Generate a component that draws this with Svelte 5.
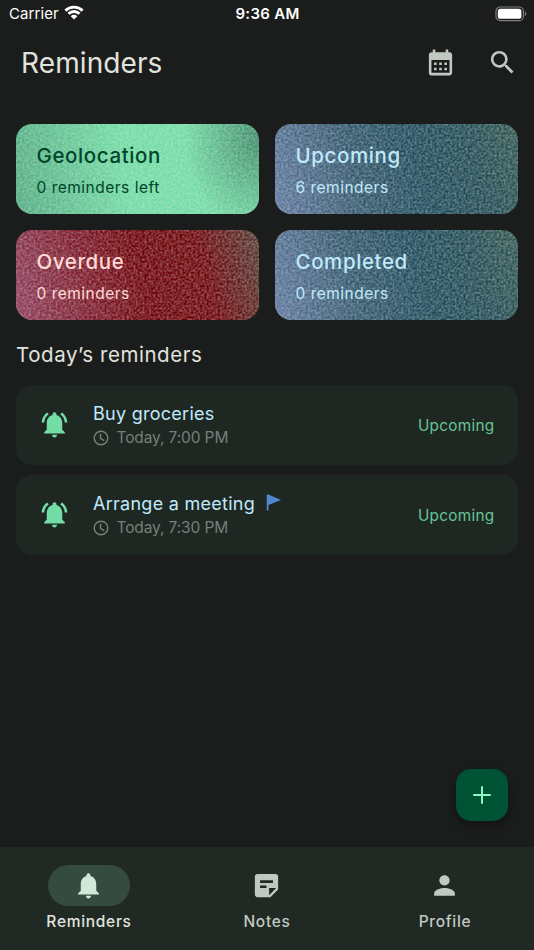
<script lang="ts">
	interface Summary {
		title: string;
		note: string;
		tone: string;
	}

	interface Reminder {
		title: string;
		time: string;
		status: string;
		flagged: boolean;
	}

	const summaries: Summary[] = [
		{ title: 'Geolocation', note: '0 reminders left', tone: 'green' },
		{ title: 'Upcoming', note: '6 reminders', tone: 'blue' },
		{ title: 'Overdue', note: '0 reminders', tone: 'red' },
		{ title: 'Completed', note: '0 reminders', tone: 'blue' },
	];

	const reminders: Reminder[] = [
		{ title: 'Buy groceries', time: 'Today, 7:00 PM', status: 'Upcoming', flagged: false },
		{ title: 'Arrange a meeting', time: 'Today, 7:30 PM', status: 'Upcoming', flagged: true },
	];

	const tabs = [
		{
			label: 'Reminders',
			icon: 'M12 22c1.1 0 2-.9 2-2h-4c0 1.1.89 2 2 2zm6-6v-5c0-3.07-1.64-5.64-4.5-6.32V4c0-.83-.67-1.5-1.5-1.5s-1.5.67-1.5 1.5v.68C7.63 5.36 6 7.92 6 11v5l-2 2v1h16v-1l-2-2z',
		},
		{
			label: 'Notes',
			icon: 'M19 3H4.99C3.89 3 3 3.9 3 5l.01 14c0 1.1.89 2 1.99 2h10l6-6V5c0-1.1-.9-2-2-2zM7 8h10v2H7V8zm5 6H7v-2h5v2zm2 5.5V14h5.5L14 19.5z',
		},
		{
			label: 'Profile',
			icon: 'M12 12c2.21 0 4-1.79 4-4s-1.79-4-4-4-4 1.79-4 4 1.79 4 4 4zm0 2c-2.67 0-8 1.34-8 4v2h16v-2c0-2.66-5.33-4-8-4z',
		},
	];

	let activeTab = $state('Reminders');
</script>

<div class="screen">
	<!-- shared grain filter for the summary cards -->
	<svg class="defs" aria-hidden="true">
		<filter id="grain" x="0" y="0" width="100%" height="100%" color-interpolation-filters="sRGB">
			<feTurbulence type="fractalNoise" baseFrequency="0.45" numOctaves="1" seed="4" />
			<feColorMatrix values="0 0 0 0 .92  0 0 0 0 .92  0 0 0 0 .92  0.75 0 0 0 -0.22" />
		</filter>
	</svg>

	<div class="status-bar">
		<div class="carrier">
			<span>Carrier</span>
			<svg class="wifi" viewBox="0 0 20 15">
				<path d="M1.4 5.6a12.4 12.4 0 0 1 17.2 0M4.5 8.8a7.9 7.9 0 0 1 11 0" />
				<path class="solid" d="M10 14.4l-3.3-3.2a4.7 4.7 0 0 1 6.6 0z" />
			</svg>
		</div>
		<span class="clock">9:36 AM</span>
		<svg class="battery" viewBox="0 0 32 16">
			<rect class="shell" x="1" y="1" width="27.4" height="13.6" rx="4.2" />
			<rect class="charge" x="2.8" y="2.8" width="23.6" height="10" rx="2.6" />
			<path class="cap" d="M29.9 5.6c1.8.7 1.8 3.9 0 4.6z" />
		</svg>
	</div>

	<header>
		<h1>Reminders</h1>
		<button aria-label="Calendar">
			<svg class="icon" viewBox="0 0 24 24"><path d="M19 4h-1V2h-2v2H8V2H6v2H5c-1.11 0-1.99.9-1.99 2L3 20a2 2 0 0 0 2 2h14c1.1 0 2-.9 2-2V6c0-1.1-.9-2-2-2zm0 16H5V10h14v10zM9 14H7v-2h2v2zm4 0h-2v-2h2v2zm4 0h-2v-2h2v2zm-8 4H7v-2h2v2zm4 0h-2v-2h2v2zm4 0h-2v-2h2v2z" /></svg>
		</button>
		<button aria-label="Search">
			<svg class="icon" viewBox="0 0 24 24"><path d="M15.5 14h-.79l-.28-.27A6.47 6.47 0 0 0 16 9.5 6.5 6.5 0 1 0 9.5 16c1.61 0 3.09-.59 4.23-1.57l.27.28v.79l5 4.99L20.49 19l-4.99-5zm-6 0C7.01 14 5 11.99 5 9.5S7.01 5 9.5 5 14 7.01 14 9.5 11.99 14 9.5 14z" /></svg>
		</button>
	</header>

	<main>
		<div class="summaries">
			{#each summaries as card}
				<div class="summary {card.tone}">
					<svg class="grain" aria-hidden="true"><rect width="100%" height="100%" filter="url(#grain)" /></svg>
					<h2>{card.title}</h2>
					<p>{card.note}</p>
				</div>
			{/each}
		</div>

		<h3>Today’s reminders</h3>

		<div class="list">
			{#each reminders as item}
				<div class="item">
					<svg class="icon bell" viewBox="0 0 24 24"><path d="M7.58 4.08L6.15 2.65C3.75 4.48 2.17 7.3 2.03 10.5h2a8.445 8.445 0 0 1 3.55-6.42zm12.39 6.42h2c-.15-3.2-1.73-6.02-4.12-7.85l-1.42 1.43a8.495 8.495 0 0 1 3.54 6.42zM18 11c0-3.07-1.64-5.64-4.5-6.32V4c0-.83-.67-1.5-1.5-1.5s-1.5.67-1.5 1.5v.68C7.63 5.36 6 7.92 6 11v5l-2 2v1h16v-1l-2-2v-5zm-6 11c1.1 0 2-.9 2-2h-4c0 1.1.89 2 2 2z" /></svg>
					<div class="details">
						<div class="name">
							<span>{item.title}</span>
							{#if item.flagged}
								<svg class="flag" viewBox="0 0 16 17"><path d="M.7.5h1.6L15 6 2.4 11v5.5H.7z" /></svg>
							{/if}
						</div>
						<div class="time">
							<svg viewBox="0 0 16 16"><circle cx="8" cy="8" r="6.8" /><path d="M7.5 3.8v4.6l3.6 2.2" /></svg>
							<span>{item.time}</span>
						</div>
					</div>
					<span class="status">{item.status}</span>
				</div>
			{/each}
		</div>
	</main>

	<button class="fab" aria-label="Add reminder">
		<svg class="icon" viewBox="0 0 24 24"><path d="M19 12.8h-6.2V19h-1.6v-6.2H5v-1.6h6.2V5h1.6v6.2H19z" /></svg>
	</button>

	<nav>
		{#each tabs as tab}
			<button class="tab" class:active={activeTab === tab.label} onclick={() => (activeTab = tab.label)}>
				<span class="pill">
					<svg class="icon" viewBox="0 0 24 24"><path d={tab.icon} /></svg>
				</span>
				<span class="label">{tab.label}</span>
			</button>
		{/each}
	</nav>
</div>

<style>
	:global(body) {
		background: #1b1d1c;
	}

	.screen {
		position: relative;
		display: flex;
		flex-direction: column;
		width: 534px;
		height: 950px;
		overflow: hidden;
		background: #1b1d1c;
		color: #e1e3df;
		font-family: Inter, 'Liberation Sans', sans-serif;
	}

	h1, h2, h3, p {
		margin: 0;
	}

	button {
		padding: 0;
		border: 0;
		background: none;
		color: inherit;
		font: inherit;
		cursor: pointer;
	}

	svg {
		display: block;
		flex: none;
	}

	.defs {
		position: absolute;
		width: 0;
		height: 0;
	}

	.icon {
		width: 31px;
		height: 31px;
		fill: currentColor;
	}

	.status-bar {
		display: grid;
		grid-template-columns: 1fr auto 1fr;
		align-items: center;
		height: 28px;
		padding: 0 7px 0 9px;
		color: #fff;
		font-size: 15px;
		line-height: 28px;
	}

	.carrier {
		display: flex;
		align-items: center;
		gap: 5px;
		letter-spacing: 0.1px;
	}

	.wifi {
		width: 20px;
		height: 15px;
		margin-top: -3px;
		fill: none;
		stroke: #fff;
		stroke-width: 2.9;
	}

	.wifi .solid {
		fill: #fff;
		stroke: none;
	}

	.clock {
		margin-right: 1px;
		font-weight: 600;
		letter-spacing: 0.3px;
	}

	.battery {
		justify-self: end;
		width: 32px;
		height: 16px;
		margin-top: -1px;
	}

	.battery .shell {
		fill: none;
		stroke: #7c7d7d;
		stroke-width: 1.2;
	}

	.battery .charge { fill: #fff; }
	.battery .cap { fill: #7c7d7d; }

	header {
		display: flex;
		align-items: center;
		gap: 31px;
		height: 68px;
		padding: 0 16px 0 21px;
		color: #c0c9c1;
	}

	h1 {
		flex: 1;
		padding-top: 2px;
		color: #e1e3df;
		font-size: 28px;
		font-weight: 400;
		line-height: 68px;
		letter-spacing: 0.1px;
	}

	main {
		flex: 1;
		padding: 28px 16px 0;
	}

	.summaries {
		display: grid;
		grid-template-columns: 1fr 1fr;
		gap: 16px;
	}

	.summary {
		position: relative;
		height: 90px;
		padding: 18px 20.5px 0;
		box-sizing: border-box;
		border-radius: 16px;
		overflow: hidden;
	}

	.summary h2, .summary p {
		position: relative;
	}

	.summary h2 {
		font-size: 20.5px;
		font-weight: 500;
		line-height: 28px;
		letter-spacing: 0.6px;
	}

	.summary p {
		margin-top: 7px;
		font-size: 15.5px;
		line-height: 22px;
		letter-spacing: 0.5px;
	}

	.grain {
		position: absolute;
		inset: 0;
		width: 100%;
		height: 100%;
	}

	.green {
		color: #00452b;
		background:
			radial-gradient(ellipse 75px 95px at 100% 15%, #3c8a66, rgba(60, 138, 102, 0)),
			linear-gradient(80deg, #4fab80, #6fdca3 45%, #70dea5);
	}

	.blue {
		color: #bfe9fb;
		background: linear-gradient(75deg, #5e779f, #2f556a 35%, #1b4958 60%, #204a52 82%, #2e564d);
	}

	.red {
		color: #ffdad6;
		background: linear-gradient(75deg, #8d3c5a, #7a1424 32%, #6c0006 52%, #6c0308 76%, #523a32);
	}

	h3 {
		margin-top: 21px;
		font-size: 20.5px;
		font-weight: 400;
		line-height: 28px;
		letter-spacing: 0.55px;
	}

	.list {
		display: flex;
		flex-direction: column;
		gap: 10.5px;
		margin-top: 16px;
	}

	.item {
		display: flex;
		align-items: center;
		height: 79.6px;
		padding: 0 23.5px 0 23px;
		box-sizing: border-box;
		border-radius: 16px;
		background: #1f2723;
	}

	.bell {
		color: #72dea5;
	}

	.details {
		flex: 1;
		margin-left: 23px;
	}

	.name {
		display: flex;
		align-items: center;
		gap: 11px;
		color: #bfe9fb;
		font-size: 18px;
		line-height: 26px;
		letter-spacing: 0.27px;
	}

	.flag {
		width: 16px;
		height: 17px;
		margin-top: -3px;
		fill: #5189d0;
	}

	.time {
		display: flex;
		align-items: center;
		gap: 7.5px;
		color: #748078;
		font-size: 15.5px;
		line-height: 22px;
		letter-spacing: -0.12px;
	}

	.time svg {
		width: 16px;
		height: 16px;
		fill: none;
		stroke: currentColor;
		stroke-width: 1.4;
	}

	.status {
		padding-top: 2px;
		color: #66c694;
		font-size: 15.3px;
		letter-spacing: 0.3px;
	}

	.fab {
		position: absolute;
		right: 26px;
		bottom: 129px;
		display: grid;
		place-items: center;
		width: 52px;
		height: 52px;
		border-radius: 15px;
		background: #005234;
		color: #8cf8c0;
		box-shadow: 0 5px 10px rgba(0, 0, 0, 0.35);
	}

	.fab .icon {
		width: 30px;
		height: 30px;
	}

	nav {
		display: grid;
		grid-template-columns: repeat(3, 1fr);
		height: 103.5px;
		background: #202924;
	}

	.tab {
		display: flex;
		flex-direction: column;
		align-items: center;
		padding-top: 18px;
		color: #c0c9c1;
	}

	.pill {
		display: flex;
		justify-content: center;
		width: 82px;
		height: 41.5px;
		padding: 5px 1px 0 0;
		box-sizing: border-box;
		border-radius: 21px;
	}

	.label {
		margin-top: 4.5px;
		font-size: 15.5px;
		font-weight: 450;
		line-height: 22px;
		letter-spacing: 0.7px;
	}

	.active { color: #e1e3df; }

	.active .pill {
		background: #364b3f;
		color: #d0e8d8;
	}
</style>
